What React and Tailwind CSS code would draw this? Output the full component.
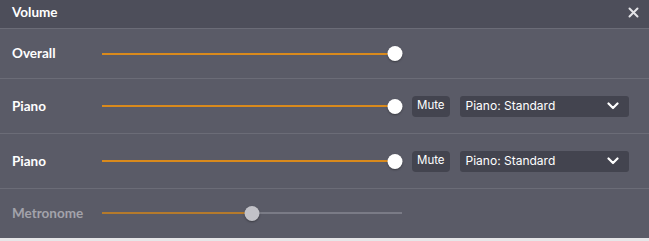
import React from 'react';

const Slider = ({ pct, width = 293, disabled }) => (
  <div className="relative h-4 flex items-center" style={{ width }}>
    <div className={`h-[2px] w-full ${disabled ? 'bg-[#7a7b86]' : 'bg-[#4f5a78]'}`} />
    <div
      className={`absolute left-0 h-[2px] ${disabled ? 'bg-[#b47a2c]' : 'bg-[#d98a1c]'}`}
      style={{ width: `${pct}%` }}
    />
    <div
      className={`absolute w-[15px] h-[15px] rounded-full -translate-x-1/2 shadow-[0_1px_2px_rgba(0,0,0,0.35)] ${disabled ? 'bg-[#c2c2c8]' : 'bg-white'}`}
      style={{ left: `${pct}%` }}
    />
  </div>
);

const Chevron = () => (
  <svg width="12" height="8" viewBox="0 0 12 8" fill="none">
    <path d="M1.5 1.5L6 6L10.5 1.5" stroke="white" strokeWidth="2.2" strokeLinecap="round" strokeLinejoin="round" />
  </svg>
);

const InstrumentRow = () => (
  <div className="h-[55px] flex items-center border-b border-[#6b6c77]">
    <span className="w-[102px] pl-[12px] text-[13.5px] font-bold text-white">Piano</span>
    <Slider pct={100} width={293} />
    <button className="ml-[17px] h-[21px] px-[5px] rounded-[4px] bg-[#43444f] text-[11.5px] text-white font-['Inter'] leading-none">Mute</button>
    <button className="ml-[10px] w-[169px] h-[21px] pl-[6px] pr-[10px] rounded-[3px] bg-[#43444f] flex items-center justify-between text-[12px] text-white font-['Inter'] leading-none">
      Piano: Standard
      <Chevron />
    </button>
  </div>
);

export default function App() {
  return (
    <div className="w-[649px] h-[241px] bg-[#e6e6e8] font-['Lato',sans-serif]">
      <div className="h-[238px] bg-[#5a5b67]">
        <div className="h-[29px] pb-[3px] bg-[#4d4e5a] border-b border-[#6b6c77] flex items-center justify-between pl-[12px] pr-[10px]">
          <span className="text-[13.5px] font-bold text-white">Volume</span>
          <svg width="11" height="11" viewBox="0 0 11 11">
            <path d="M1.5 1.5L9.5 9.5M9.5 1.5L1.5 9.5" stroke="#e4e4e8" strokeWidth="2" strokeLinecap="round" />
          </svg>
        </div>
        <div className="h-[50px] flex items-center border-b border-[#6b6c77]">
          <span className="w-[102px] pl-[12px] text-[13.5px] font-bold text-white">Overall</span>
          <Slider pct={100} width={293} />
        </div>
        <InstrumentRow />
        <InstrumentRow />
        <div className="h-[48px] flex items-center">
          <span className="w-[102px] pl-[12px] text-[13.5px] font-bold text-[#a3a3ab]">Metronome</span>
          <Slider pct={50} width={300} disabled />
        </div>
      </div>
    </div>
  );
}
